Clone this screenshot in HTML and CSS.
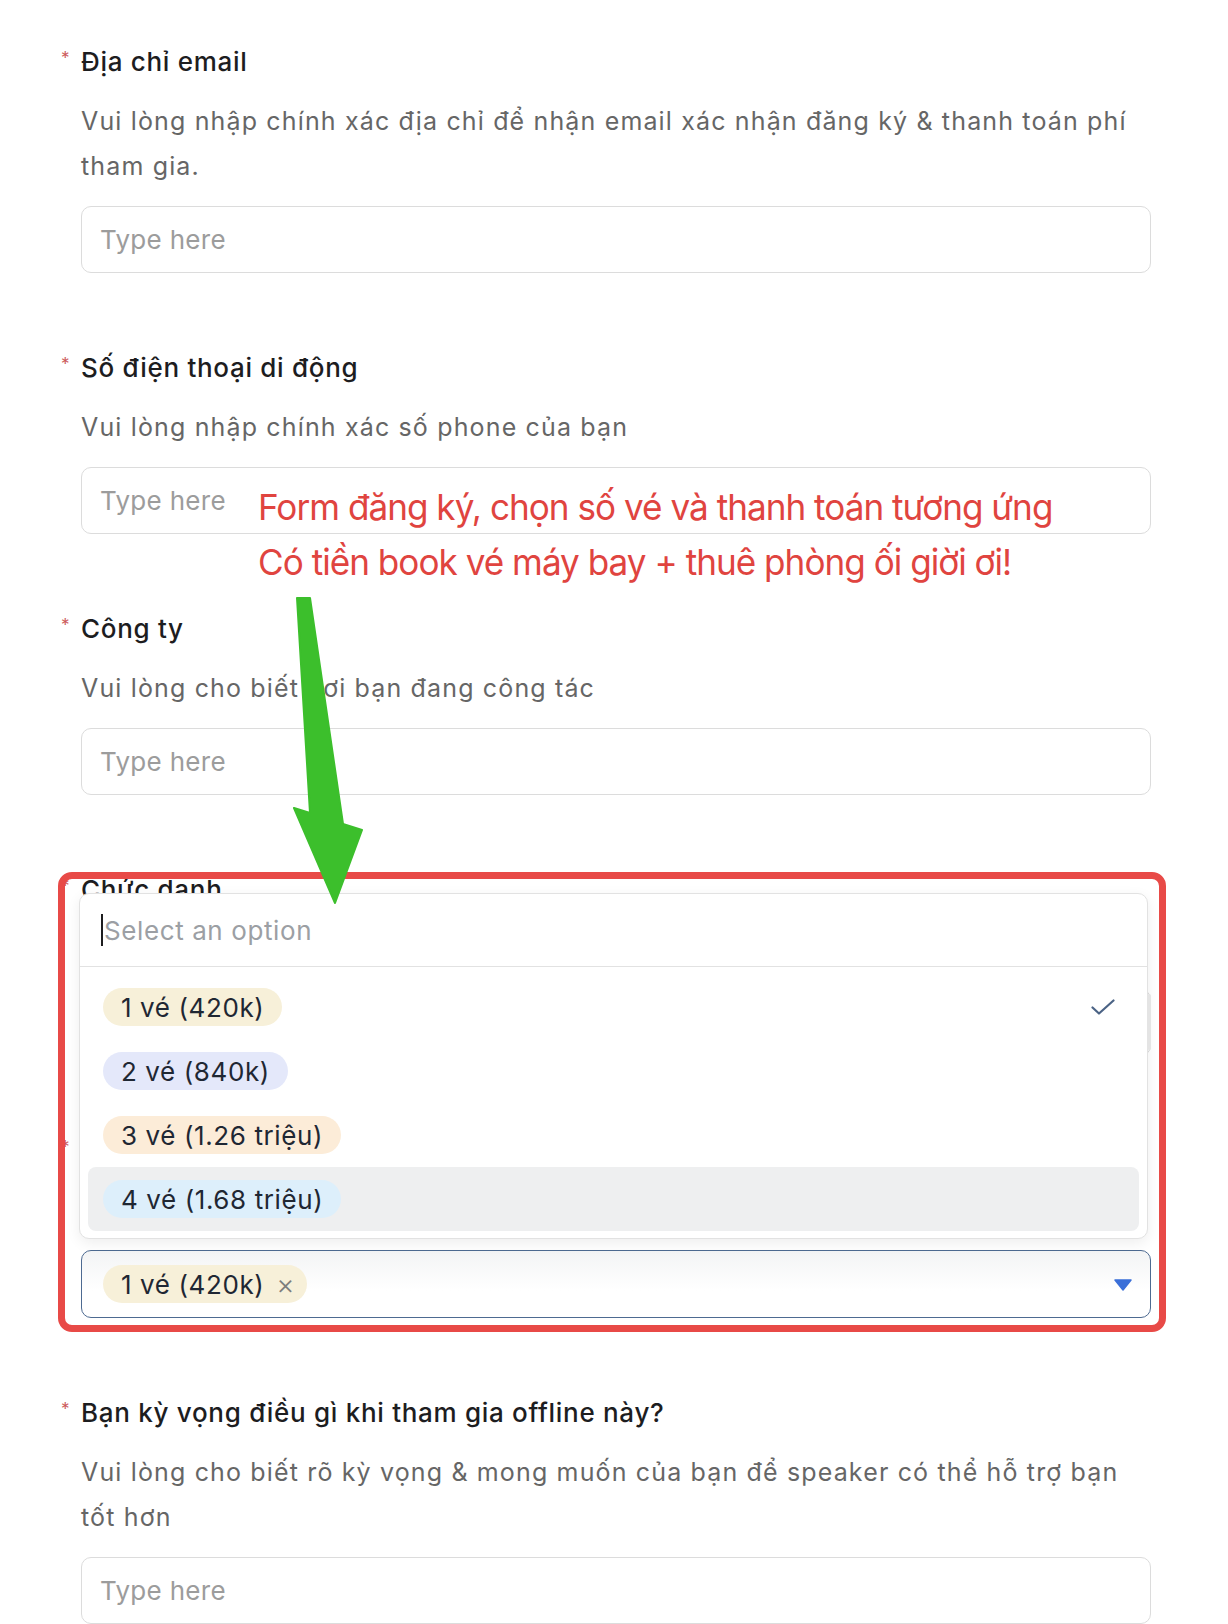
FILE: index.html
```html
<!DOCTYPE html>
<html lang="vi">
<head>
    <meta charset="UTF-8">
    <meta name="viewport" content="width=device-width, initial-scale=1.0">
    <title>Đăng ký offline</title>
    <link rel="stylesheet" href="styles.css">
</head>
<body>
    <div class="page">
        <form class="form">
            <div class="field">
                <div class="label"><span class="req">*</span>Địa chỉ email</div>
                <p class="desc">Vui lòng nhập chính xác địa chỉ để nhận email xác nhận đăng ký &amp; thanh toán phí tham gia.</p>
                <input class="input" type="text" placeholder="Type here">
            </div>

            <div class="field">
                <div class="label"><span class="req">*</span>Số điện thoại di động</div>
                <p class="desc">Vui lòng nhập chính xác số phone của bạn</p>
                <input class="input" type="text" placeholder="Type here">
            </div>

            <div class="field">
                <div class="label"><span class="req">*</span>Công ty</div>
                <p class="desc">Vui lòng cho biết nơi bạn đang công tác</p>
                <input class="input" type="text" placeholder="Type here">
            </div>

            <div class="field">
                <div class="label"><span class="req">*</span>Chức danh</div>
                <p class="desc">Vui lòng cho biết chức danh của bạn</p>
                <input class="input" type="text" placeholder="Type here">
            </div>

            <div class="field">
                <div class="label"><span class="req">*</span>Số lượng vé</div>
                <p class="desc">Vui lòng chọn số vé bạn muốn mua</p>
                <div class="select-wrap">
                    <!-- open dropdown -->
                    <div class="dropdown">
                        <div class="search"><span class="caret"></span>Select an option</div>
                        <ul class="options">
                            <li class="option"><span class="chip chip-cream">1 vé (420k)</span>
                                <svg class="check" width="24" height="16" viewBox="0 0 24 16"><path d="M1.5 8.5 L8 14.5 L22.5 1.5" fill="none" stroke="#4b6385" stroke-width="2.2" stroke-linecap="round" stroke-linejoin="round"/></svg>
                            </li>
                            <li class="option"><span class="chip chip-lilac">2 vé (840k)</span></li>
                            <li class="option"><span class="chip chip-peach">3 vé (1.26 triệu)</span></li>
                            <li class="option hover"><span class="chip chip-sky">4 vé (1.68 triệu)</span></li>
                        </ul>
                        <span class="scrollbar"></span>
                    </div>
                    <div class="select">
                        <span class="chip chip-cream">1 vé (420k)<span class="remove">×</span></span>
                        <svg class="arrow-down" width="18" height="12" viewBox="0 0 18 12"><path d="M1 1 L17 1 L9 11 Z" fill="#3a6fd8" stroke="#3a6fd8" stroke-width="1.5" stroke-linejoin="round"/></svg>
                    </div>
                </div>
            </div>

            <div class="field">
                <div class="label"><span class="req">*</span>Bạn kỳ vọng điều gì khi tham gia offline này?</div>
                <p class="desc">Vui lòng cho biết rõ kỳ vọng &amp; mong muốn của bạn để speaker có thể hỗ trợ bạn tốt hơn</p>
                <input class="input" type="text" placeholder="Type here">
            </div>
        </form>

        <!-- annotations drawn over the screenshot -->
        <div class="note">Form đăng ký, chọn số vé và thanh toán tương ứng<br>Có tiền book vé máy bay + thuê phòng ối giời ơi!</div>
        <div class="mark-box"></div>
        <svg class="mark-arrow" width="80" height="315" viewBox="0 0 80 315">
            <polygon points="7,3 20,3 53,229 72,235 45,308 4,213 20,218" fill="#3cbf2c" stroke="#3cbf2c" stroke-width="2" stroke-linejoin="round"/>
        </svg>
    </div>
</body>
</html>
```

FILE: styles.css
```css
/* Base */
body {
    margin: 0;
    background: #fff;
    font-family: 'Inter', 'Noto Sans', sans-serif;
    color: #1d1d1f;
}

.page {
    position: relative;
    width: 1228px;
    height: 1624px;
    overflow: hidden;
}

.form {
    padding: 45px 77px 0 81px;
}

/* Fields */
.field {
    margin-bottom: 78px;
}

.label {
    position: relative;
    font-size: 26px;
    line-height: 34px;
    font-weight: 500;
    letter-spacing: 0.7px;
    color: #1d1d1f;
}

.req {
    position: absolute;
    left: -20px;
    top: -4px;
    font-size: 17px;
    font-weight: 400;
    letter-spacing: 0;
    color: #cc5a5a;
}

.desc {
    margin: 20px 0 0;
    font-size: 25px;
    line-height: 45px;
    letter-spacing: 1.15px;
    color: #666;
}

.input {
    display: block;
    box-sizing: border-box;
    width: 100%;
    height: 67px;
    margin-top: 17px;
    padding: 0 18px;
    border: 1.5px solid #dcdcdc;
    border-radius: 10px;
    font-family: inherit;
    font-size: 26px;
    letter-spacing: 0.3px;
    color: #1d1d1f;
    outline: none;
}

.input::placeholder {
    color: #9c9c9c;
}

/* Select */
.select-wrap {
    position: relative;
    margin-top: 17px;
}

.select {
    box-sizing: border-box;
    height: 68px;
    display: flex;
    align-items: center;
    justify-content: space-between;
    padding: 0 18px 0 21px;
    border: 1.5px solid #4d6a91;
    border-radius: 10px;
    background: linear-gradient(#f3f4f5, #fff 60%);
}

.chip {
    display: inline-flex;
    align-items: center;
    height: 38px;
    padding: 0 18px;
    border-radius: 19px;
    font-size: 26px;
    letter-spacing: 0.6px;
    color: #1f2733;
    white-space: nowrap;
}

.chip-cream { background: #f7f0d9; }
.chip-lilac { background: #e4e8fa; }
.chip-peach { background: #fcecd8; }
.chip-sky { background: #ddeffb; }

.select .chip {
    padding-right: 12px;
}

.remove {
    margin-left: 12px;
    font-size: 28px;
    font-weight: 300;
    color: #7d7d7d;
}

.arrow-down {
    margin-top: 2px;
}

/* Dropdown */
.dropdown {
    position: absolute;
    left: -2px;
    right: 3px;
    bottom: calc(100% + 11px);
    background: #fff;
    border: 1px solid #e2e2e2;
    border-radius: 10px;
    box-shadow: 0 4px 14px rgba(0, 0, 0, 0.07);
    z-index: 10;
}

.search {
    display: flex;
    align-items: center;
    height: 72px;
    padding-left: 21px;
    border-bottom: 1.5px solid #e2e2e2;
    font-size: 26px;
    letter-spacing: 0.6px;
    color: #9c9fa4;
}

.caret {
    width: 2px;
    height: 32px;
    margin-right: 1px;
    background: #1d1d1f;
}

.options {
    list-style: none;
    margin: 0;
    padding: 8px 8px 7px;
}

.option {
    display: flex;
    align-items: center;
    justify-content: space-between;
    height: 64px;
    padding: 0 24px 0 15px;
    border-radius: 8px;
}

.option.hover {
    background: #eeeff0;
}

.scrollbar {
    position: absolute;
    right: -4px;
    top: 100px;
    width: 4px;
    height: 56px;
    border-radius: 2px;
    background: #e4e4e4;
}

/* Annotations */
.note {
    position: absolute;
    left: 258px;
    top: 480px;
    font-size: 36px;
    line-height: 55px;
    color: #e0443f;
    letter-spacing: -1px;
    transform: scaleX(0.975);
    transform-origin: left top;
    white-space: nowrap;
    z-index: 20;
}

.mark-box {
    position: absolute;
    left: 58px;
    top: 872px;
    width: 1108px;
    height: 460px;
    box-sizing: border-box;
    border: 7px solid #e84a47;
    border-radius: 14px;
    z-index: 20;
}

.mark-arrow {
    position: absolute;
    left: 290px;
    top: 595px;
    z-index: 30;
}
```
